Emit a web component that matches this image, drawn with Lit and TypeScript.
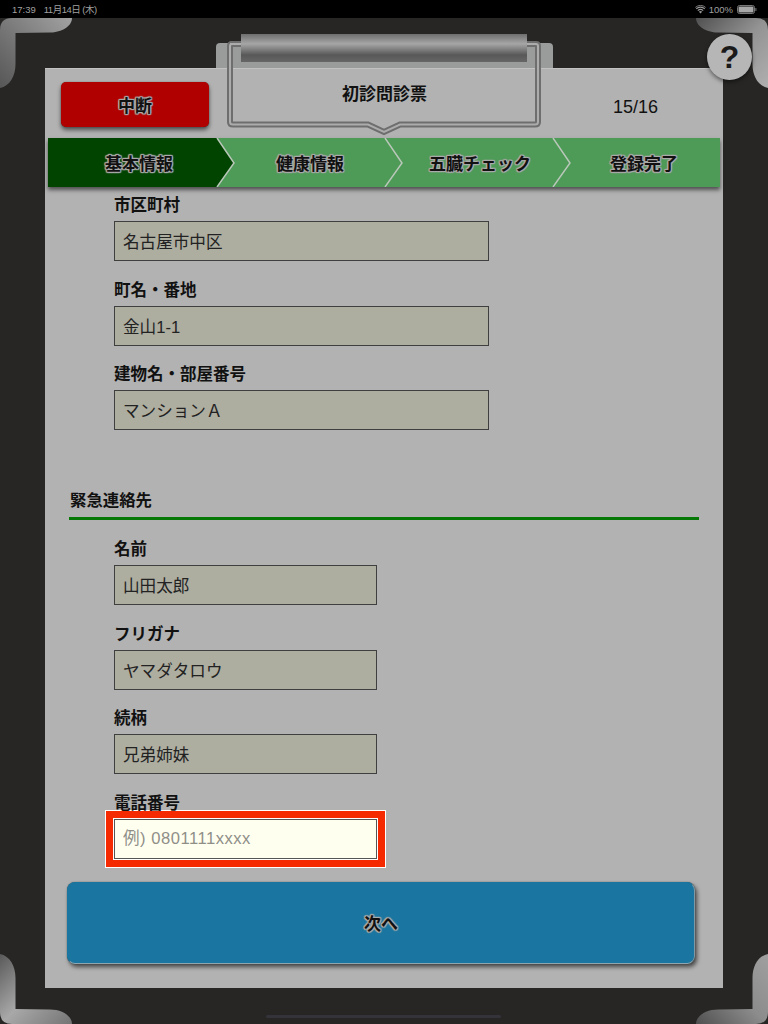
import { LitElement, html, css } from "lit";
import { customElement } from "lit/decorators.js";

const STEPS = ["基本情報", "健康情報", "五臓チェック", "登録完了"];

const ADDRESS = [
  { label: "市区町村", value: "名古屋市中区" },
  { label: "町名・番地", value: "金山1-1" },
  { label: "建物名・部屋番号", value: "マンションＡ" },
];

const CONTACT = [
  { label: "名前", value: "山田太郎" },
  { label: "フリガナ", value: "ヤマダタロウ" },
  { label: "続柄", value: "兄弟姉妹" },
];

// gradient stops per corner, from the end of the leg to the end of the bar
const CORNERS = [
  { pos: "tl", stops: ["#565656", "#7a7a7a", "#a2a2a2"] },
  { pos: "tr", stops: ["#b0b0b0", "#939393", "#505050"] },
  { pos: "bl", stops: ["#585858", "#a8a8a8", "#747474"] },
  { pos: "br", stops: ["#a0a0a0", "#8c8c8c", "#505050"] },
];

const OUTLINE =
  "M14 10 H320 Q322 10 322 12 V88 Q322 90.5 319 90.5 H184 L168 98 L152 90.5 H17 Q14 90.5 14 88 V12 Q14 10 16 10 Z";

@customElement("app-root")
export class AppRoot extends LitElement {
  static styles = css`
    :host {
      display: block;
      width: 768px;
      height: 1024px;
      position: relative;
      overflow: hidden;
      background: #272625;
      font-family: "Liberation Sans", "Noto Sans CJK JP", sans-serif;
      color: #111;
    }

    .status {
      height: 18px;
      background: #000;
      color: #a0a0a0;
      font-size: 9.5px;
      display: flex;
      align-items: center;
      padding: 0 11px 0 12px;
      box-sizing: border-box;
    }
    .status .date {
      margin-left: 8px;
      letter-spacing: -0.5px;
    }
    .status .right {
      margin-left: auto;
      display: flex;
      align-items: center;
      gap: 3px;
    }
    .battery {
      display: block;
      margin-left: 1px;
    }

    .board {
      padding: 50px 45px 36px;
    }

    .sheet {
      height: 920px;
      background: #b2b2b2;
      display: flex;
      flex-direction: column;
      box-shadow: inset 0 1px 0 #c2c2c2;
    }

    .head {
      height: 70px;
      flex: none;
      display: flex;
      align-items: flex-start;
      padding: 14px 0 0 16px;
      box-sizing: border-box;
    }
    .abort {
      width: 148px;
      height: 45px;
      border-radius: 5px;
      background: #b00000;
      box-shadow: 0 3px 4px rgba(0, 0, 0, 0.55), 0 0 1px rgba(0, 0, 0, 0.5);
      display: flex;
      align-items: center;
      justify-content: center;
    }
    .halo {
      font-size: 17px;
      font-weight: 700;
      color: #111;
      text-shadow: 1px 0 1px #aaa, -1px 0 1px #aaa, 0 1px 1px #aaa,
        0 -1px 1px #aaa, 1px 1px 1px #aaa, -1px -1px 1px #aaa, 1px -1px 1px #aaa,
        -1px 1px 1px #aaa;
    }
    .count {
      margin-left: auto;
      margin-right: 65px;
      margin-top: 13px;
      font-size: 18px;
      line-height: 24px;
    }

    .steps {
      flex: none;
      position: relative;
      z-index: 1;
      margin: 0 3px;
      height: 49px;
      background: #4e9a57;
      box-shadow: 0 3px 4px rgba(0, 0, 0, 0.55);
      display: grid;
      grid-template-columns: 182px 160px 180px 148px;
    }
    .steps svg {
      position: absolute;
      inset: 0;
      width: 100%;
      height: 100%;
    }
    .step {
      position: relative;
      display: flex;
      align-items: center;
      justify-content: center;
    }

    .form {
      flex: 1;
      min-height: 0;
      overflow: hidden;
      padding: 6px 0 0 22px;
      box-sizing: border-box;
    }
    .fields {
      margin-left: 47px;
    }
    .field {
      height: 84.7px;
    }
    .field label {
      display: block;
      font-size: 16.5px;
      font-weight: 700;
      line-height: 24px;
      margin-bottom: 4px;
    }
    .field input {
      display: block;
      box-sizing: border-box;
      width: 263px;
      height: 40px;
      margin: 0;
      padding: 0 8px;
      border: 1px solid #3f3f3f;
      border-radius: 0;
      outline: none;
      background: #adada0;
      color: #222;
      font: 16.6px "Liberation Sans", "Noto Sans CJK JP", sans-serif;
    }
    .field input.wide {
      width: 375px;
    }
    .field input.active {
      background: #fffff0;
      border-color: #555;
      box-shadow: 0 0 0 1px #fff, 0 0 0 8px #f52a00, 0 0 0 9px #fff;
    }
    .field input::placeholder {
      color: #8f8f88;
      opacity: 1;
      letter-spacing: 0.5px;
    }

    .section {
      margin: 41px 24px 17px 2px;
      padding: 0 1px 5px;
      border-bottom: 3px solid #067806;
      font-size: 16.4px;
      font-weight: 700;
      line-height: 24px;
    }

    .next {
      width: 628px;
      height: 82px;
      margin-top: 6px;
      box-sizing: border-box;
      border-radius: 8px;
      background: #1a76a0;
      border: 1px solid #1a76a0;
      border-bottom-color: #8fa6b0;
      border-right-color: #7f9aa6;
      box-shadow: 2px 3px 4px rgba(0, 0, 0, 0.6), 0 0 1px rgba(0, 0, 0, 0.6);
      display: flex;
      align-items: center;
      justify-content: center;
    }

    .clip {
      position: absolute;
      left: 216px;
      top: 34px;
      width: 337px;
      height: 102px;
      z-index: 2;
      display: flex;
      justify-content: center;
      padding-top: 48px;
      box-sizing: border-box;
      font-size: 17px;
      font-weight: 700;
      line-height: 24px;
    }
    .clip svg {
      position: absolute;
      inset: 0;
    }
    .clip span {
      position: relative;
      top: 1px;
    }

    .corner {
      position: absolute;
      width: 72px;
      height: 71px;
      z-index: 2;
    }
    .corner.tl {
      left: 0;
      top: 18px;
    }
    .corner.tr {
      right: 0;
      top: 18px;
      transform: scaleX(-1);
    }
    .corner.bl {
      left: 0;
      bottom: 0;
      transform: scaleY(-1);
    }
    .corner.br {
      right: 0;
      bottom: 0;
      transform: scale(-1, -1);
    }

    .help {
      position: absolute;
      left: 707px;
      top: 34px;
      width: 45px;
      height: 46px;
      border-radius: 50%;
      z-index: 3;
      background: #b6b6b6;
      box-shadow: 0 2px 4px rgba(0, 0, 0, 0.5);
      display: flex;
      align-items: center;
      justify-content: center;
      font-size: 32px;
      font-weight: 700;
      color: #1a1a1a;
    }

    .home {
      position: absolute;
      left: 266px;
      bottom: 6px;
      width: 235px;
      height: 3px;
      border-radius: 2px;
      background: #34333a;
    }
  `;

  private field(label: string, value: string, wide = false) {
    return html`<div class="field">
      <label>${label}</label>
      <input class=${wide ? "wide" : ""} .value=${value} readonly />
    </div>`;
  }

  private stepsArt() {
    return html`<svg viewBox="0 0 672 49" preserveAspectRatio="none">
      <polygon points="0,0 169,0 186,25 169,49 0,49" fill="#004400" />
      <polyline points="169,0 186,25 169,49" fill="none" stroke="#b9c7b9" stroke-width="1.5" />
      <polyline points="337,0 354,25 337,49" fill="none" stroke="#b9c7b9" stroke-width="1.5" />
      <polyline points="505,0 522,25 505,49" fill="none" stroke="#b9c7b9" stroke-width="1.5" />
    </svg>`;
  }

  private clipArt() {
    return html`<svg width="337" height="102" viewBox="0 0 337 102">
      <defs>
        <linearGradient id="bar" x1="0" y1="0" x2="0" y2="1">
          <stop offset="0" stop-color="#6e6e6e" />
          <stop offset="0.35" stop-color="#a6a6a6" />
          <stop offset="0.75" stop-color="#585858" />
          <stop offset="1" stop-color="#666" />
        </linearGradient>
      </defs>
      <path d="M0 34 V13 Q0 9 4 9 H333 Q337 9 337 13 V34 Z" fill="#9a9c9c" />
      <path d=${OUTLINE} fill="none" stroke="#6e6e6e" stroke-width="6" />
      <path d=${OUTLINE} fill="none" stroke="#acacac" stroke-width="2" />
      <rect x="25" y="0" width="286" height="28" fill="url(#bar)" />
    </svg>`;
  }

  private corner(pos: string, stops: string[]) {
    return html`<svg class="corner ${pos}" viewBox="0 0 72 71">
      <defs>
        <linearGradient id="cg-${pos}" gradientUnits="userSpaceOnUse" x1="0" y1="71" x2="72" y2="0">
          <stop offset="0" stop-color=${stops[0]} />
          <stop offset="0.5" stop-color=${stops[1]} />
          <stop offset="1" stop-color=${stops[2]} />
        </linearGradient>
      </defs>
      <path
        d="M72 0 C72 8 62 14.5 50 14.5 L15.5 15 L15.5 46 C15.5 58 10 68 0 70 L0 12 Q0 0 12 0 Z"
        fill="url(#cg-${pos})"
      />
    </svg>`;
  }

  render() {
    return html`
      <div class="status">
        <span>17:39</span>
        <span class="date">11月14日 (木)</span>
        <div class="right">
          <svg width="11" height="9" viewBox="0 0 11 9">
            <path d="M5.5 8.6 3.9 6.8a2.3 2.3 0 0 1 3.2 0Z" fill="#9a9a9a" />
            <path d="M2.8 5.6a3.9 3.9 0 0 1 5.4 0M1.2 3.9a6.2 6.2 0 0 1 8.6 0" fill="none" stroke="#9a9a9a" stroke-width="1.1" />
            <path d="M.4 2.4a7.6 7.6 0 0 1 10.2 0" fill="none" stroke="#9a9a9a" stroke-width=".8" />
          </svg>
          <span>100%</span>
          <svg class="battery" width="20" height="9" viewBox="0 0 20 9">
            <rect x=".5" y=".5" width="17" height="8" rx="2" fill="none" stroke="#777" />
            <rect x="1.5" y="1.5" width="15" height="6" rx="1" fill="#a8a8a8" />
            <rect x="18.4" y="3" width="1" height="3" fill="#777" />
          </svg>
        </div>
      </div>

      <div class="board">
        <div class="sheet">
          <div class="head">
            <div class="abort"><span class="halo">中断</span></div>
            <div class="count">15/16</div>
          </div>
          <div class="steps">
            ${this.stepsArt()}
            ${STEPS.map((s) => html`<div class="step"><span class="halo">${s}</span></div>`)}
          </div>
          <div class="form">
            <div class="fields">
              ${ADDRESS.map((f) => this.field(f.label, f.value, true))}
            </div>
            <div class="section">緊急連絡先</div>
            <div class="fields">
              ${CONTACT.map((f) => this.field(f.label, f.value))}
              <div class="field">
                <label>電話番号</label>
                <input class="active" placeholder="例) 0801111xxxx" readonly />
              </div>
            </div>
            <div class="next"><span class="halo">次へ</span></div>
          </div>
        </div>
      </div>

      <div class="clip">
        ${this.clipArt()}
        <span>初診問診票</span>
      </div>

      ${CORNERS.map((c) => this.corner(c.pos, c.stops))}
      <div class="help">?</div>
      <div class="home"></div>
    `;
  }
}
